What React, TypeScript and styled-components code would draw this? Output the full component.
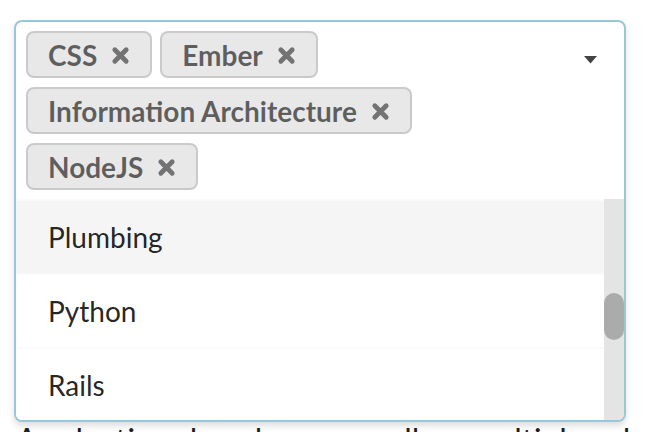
import { useLayoutEffect, useRef } from "react";
import styled, { createGlobalStyle } from "styled-components";

const GlobalStyle = createGlobalStyle`
  html, body {
    margin: 0;
    padding: 0;
    background: #ffffff;
  }
  body {
    font-family: Lato, "Helvetica Neue", Arial, sans-serif;
    color: rgba(0, 0, 0, 0.87);
  }
`;

const SELECTED = ["CSS", "Ember", "Information Architecture", "NodeJS"];

const OPTIONS = [
  "Angular",
  "Graphic Design",
  "HTML",
  "Javascript",
  "Mechanical Engineering",
  "Meteor",
  "Plumbing",
  "Python",
  "Rails",
  "React",
  "Kitchen Repair",
  "Ruby",
  "UI Design",
  "User Experience",
];

const Page = styled.div`
  padding: 20px 28px 0 14px;
`;

const Dropdown = styled.div`
  width: 612px;
  box-sizing: border-box;
  border: 2px solid #96c8da;
  border-radius: 8px;
  box-shadow: 0 4px 6px 0 rgba(34, 36, 38, 0.15);
  background: #ffffff;
  display: flex;
  flex-direction: column;
  overflow: hidden;
`;

const Selection = styled.div`
  display: flex;
  align-items: flex-start;
  padding: 5px 0 4px 10px;
`;

const LabelList = styled.div`
  flex: 1;
  display: flex;
  flex-wrap: wrap;
  align-items: flex-start;
`;

const Label = styled.span`
  display: inline-flex;
  align-items: center;
  margin: 4px 8px 5px 0;
  padding: 10px 22px 9px;
  line-height: 28px;
  font-size: 28px;
  font-weight: 700;
  color: rgba(0, 0, 0, 0.6);
  background: #e8e8e8;
  border-radius: 8px;
  box-shadow: 0 0 0 2px rgba(34, 36, 38, 0.15) inset;
  white-space: nowrap;
`;

const DeleteIcon = styled.svg`
  width: 19px;
  height: 19px;
  margin-left: 14px;
  opacity: 0.5;
`;

const Caret = styled.svg`
  width: 13px;
  height: 8px;
  margin: 29px 27px 0 0;
`;

const Menu = styled.div`
  display: flex;
  height: 221px;
`;

const Viewport = styled.div`
  flex: 1;
  overflow: hidden;
`;

const ScrollTrack = styled.div`
  width: 20px;
  padding-top: 94px;
  background: #e4e4e4;
`;

const ScrollThumb = styled.div`
  height: 47px;
  border-radius: 10px;
  background: #ababab;
`;

const Item = styled.div<{ $active?: boolean }>`
  padding: 22px 32px;
  line-height: 28px;
  font-size: 28px;
  color: rgba(0, 0, 0, 0.87);
  border-top: 2px solid #fafafa;
  background: ${(p) => (p.$active ? "#f5f5f5" : "#ffffff")};
`;

const Caption = styled.p`
  margin: 2px 0 0 2px;
  font-size: 32px;
  line-height: 1;
  white-space: nowrap;
  color: #1b1c1d;
`;

const App = (): JSX.Element => {
  const viewRef = useRef<HTMLDivElement>(null);
  const activeRef = useRef<HTMLDivElement>(null);

  // scroll the list so the hovered item sits at the top
  useLayoutEffect(() => {
    if (viewRef.current && activeRef.current) {
      viewRef.current.scrollTop = activeRef.current.offsetTop - viewRef.current.offsetTop;
    }
  }, []);

  return (
    <>
      <GlobalStyle />
      <Page>
        <Dropdown>
          <Selection>
            <LabelList>
              {SELECTED.map((name) => (
                <Label key={name}>
                  {name}
                  <DeleteIcon viewBox="0 0 20 20">
                    <path d="M4 4 L16 16 M16 4 L4 16" stroke="#000" strokeWidth="5" strokeLinecap="round" />
                  </DeleteIcon>
                </Label>
              ))}
            </LabelList>
            <Caret viewBox="0 0 13 8">
              <path d="M0 0 H13 L6.5 7.5 Z" fill="#444" />
            </Caret>
          </Selection>
          <Menu>
            <Viewport ref={viewRef}>
              {OPTIONS.map((name) => (
                <Item
                  key={name}
                  ref={name === "Plumbing" ? activeRef : undefined}
                  $active={name === "Plumbing"}
                >
                  {name}
                </Item>
              ))}
            </Viewport>
            <ScrollTrack>
              <ScrollThumb />
            </ScrollTrack>
          </Menu>
        </Dropdown>
        <Caption>A selection dropdown can allow multiple selections</Caption>
      </Page>
    </>
  );
};

export default App;
